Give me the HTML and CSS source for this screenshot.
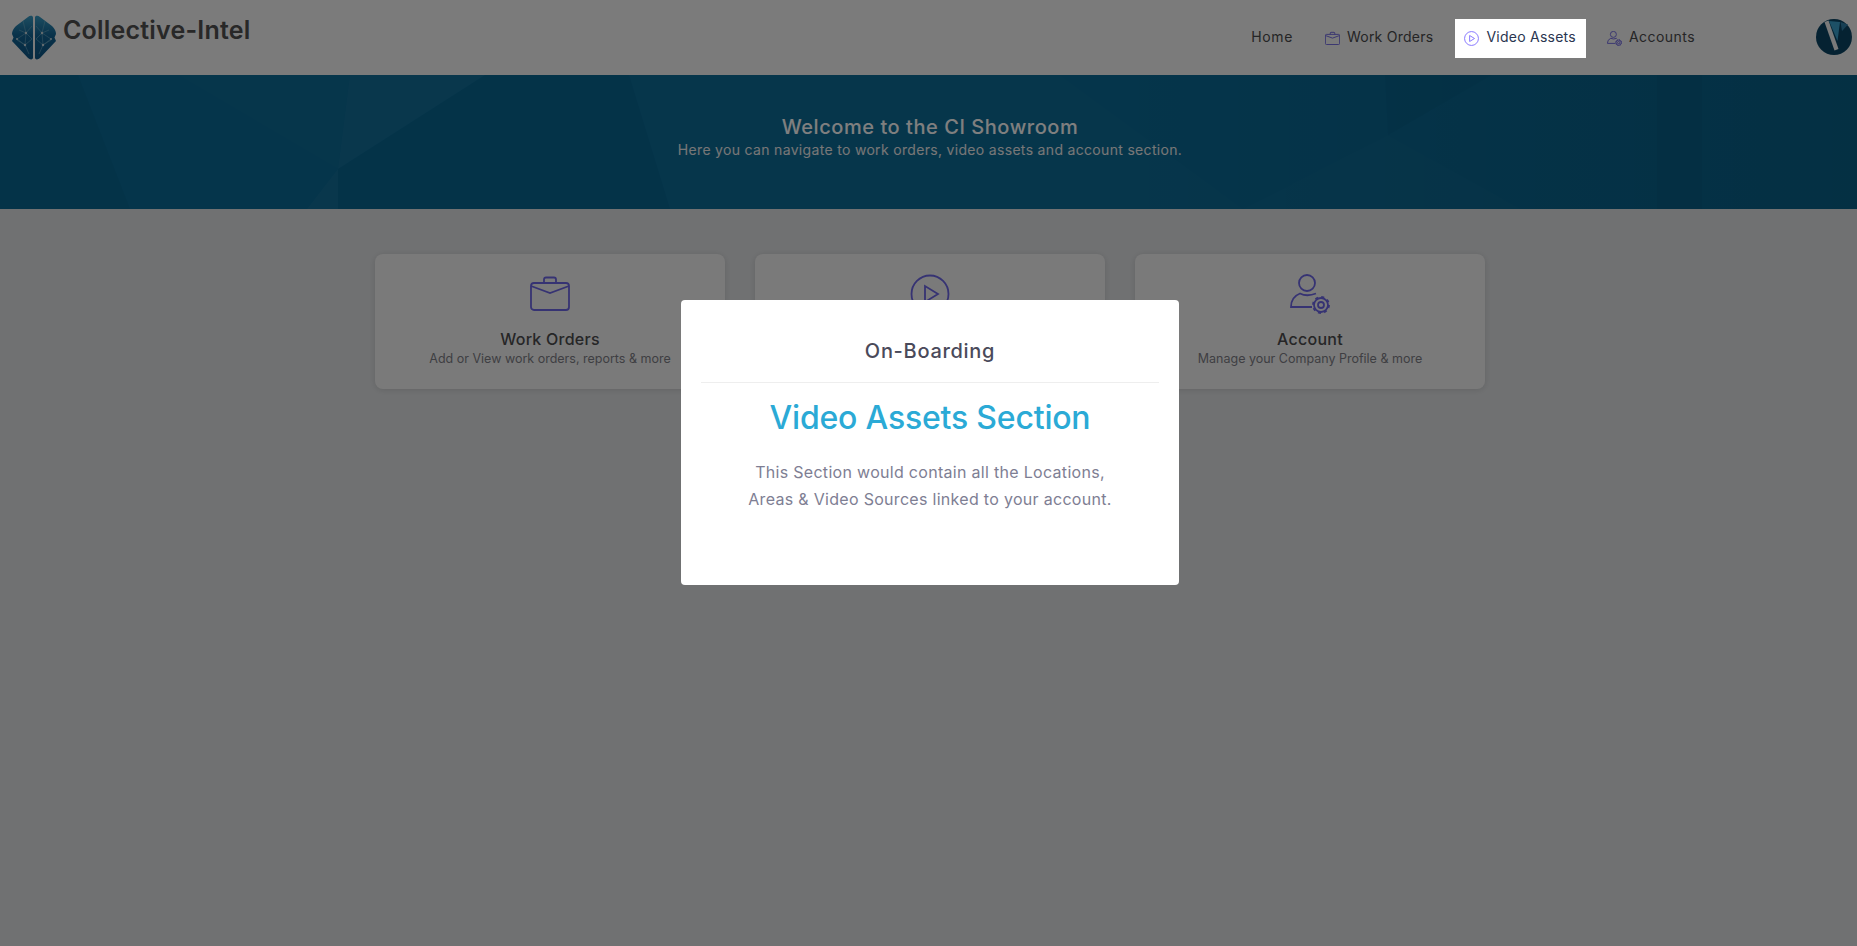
FILE: index.html
```html
<!DOCTYPE html>
<html lang="en">
<head>
<meta charset="utf-8">
<title>Collective-Intel</title>
<link rel="stylesheet" href="styles.css">
</head>
<body>
<svg class="defs" width="0" height="0" aria-hidden="true">
  <defs>
    <linearGradient id="lobe" x1="0" y1="0" x2="0" y2="1">
      <stop offset="0" stop-color="#3a9cc4"/>
      <stop offset="0.45" stop-color="#126494"/>
      <stop offset="1" stop-color="#0e5584"/>
    </linearGradient>
    <linearGradient id="hero-shade" x1="0" y1="0" x2="1" y2="0">
      <stop offset="0" stop-color="#000" stop-opacity="0"/>
      <stop offset="0.6" stop-color="#000" stop-opacity="0"/>
      <stop offset="1" stop-color="#000" stop-opacity="0.1"/>
    </linearGradient>
    <symbol id="i-case" viewBox="0 0 40 36">
      <rect x="1" y="7" width="38" height="27" rx="3"/>
      <path d="M14 7V3.500Q14 1.500 16 1.500H24Q26 1.500 26 3.500V7"/>
      <path d="M1 10L20 17L39 10"/>
    </symbol>
    <symbol id="i-play" viewBox="0 0 40 40">
      <circle cx="20" cy="20" r="18.500"/>
      <path d="M15 12V28L28 20Z"/>
    </symbol>
    <symbol id="i-user" viewBox="0 0 40 40">
      <circle cx="17" cy="9" r="8"/>
      <path d="M22 33H1Q1 23 10 19.500Q17 23 26 19.500"/>
      <circle cx="31" cy="31" r="7"/>
      <circle cx="31" cy="31" r="8" stroke-dasharray="3 3.280"/>
      <circle cx="31" cy="31" r="3"/>
    </symbol>
  </defs>
</svg>

<header class="topbar">
  <a class="brand" href="#">
    <svg class="brand-logo" viewBox="0 0 46 45" aria-hidden="true">
      <g class="lobe">
        <path class="lobe-fill" d="M22 2.500C22 .5 19 .2 17 2L5 11Q1 15 1 19L2.500 22.500L1 26L17 43C19 45 22 45 22 42.500Z"/>
        <path class="lobe-net" d="M8 15L15 18L21 11M15 18L6 24L14 30L21 24M15 18L14 30L18 39M14 30L6 25M15 18L21 24M12 6L15 18"/>
        <circle class="lobe-dot" cx="15" cy="18" r="1.200"/>
        <circle class="lobe-dot" cx="14" cy="30" r="1.200"/>
        <circle class="lobe-dot" cx="6" cy="24" r="1"/>
      </g>
      <g class="lobe" transform="translate(46 0) scale(-1 1)">
        <path class="lobe-fill" d="M22 2.500C22 .5 19 .2 17 2L5 11Q1 15 1 19L2.500 22.500L1 26L17 43C19 45 22 45 22 42.500Z"/>
        <path class="lobe-net" d="M8 15L15 18L21 11M15 18L6 24L14 30L21 24M15 18L14 30L18 39M14 30L6 25M15 18L21 24M12 6L15 18"/>
        <circle class="lobe-dot" cx="15" cy="18" r="1.200"/>
        <circle class="lobe-dot" cx="14" cy="30" r="1.200"/>
        <circle class="lobe-dot" cx="6" cy="24" r="1"/>
      </g>
    </svg>
    <span class="brand-name">Collective-Intel</span>
  </a>
  <nav class="nav">
    <a class="nav-item" href="#">Home</a>
    <a class="nav-item" href="#"><svg class="nav-icon"><use href="#i-case"/></svg>Work Orders</a>
    <a class="nav-item nav-item-active" href="#"><svg class="nav-icon"><use href="#i-play"/></svg>Video Assets</a>
    <a class="nav-item nav-item-last" href="#"><svg class="nav-icon"><use href="#i-user"/></svg>Accounts</a>
  </nav>
  <svg class="avatar" viewBox="0 0 36 36" aria-hidden="true">
    <circle cx="18" cy="18" r="18" fill="#0a4464"/>
    <path d="M24.500 3L32 5.500L26 12Z" fill="#2f7fa8"/>
    <path d="M13 2L24 3L21.500 22Z" fill="#3aa0cc"/>
    <path d="M8.500 3L12.500 1.500L22.500 30L18.500 31.500Z" fill="#f4f4f4"/>
  </svg>
</header>

<section class="hero">
  <svg class="hero-facets" viewBox="0 0 1857 134" preserveAspectRatio="none" aria-hidden="true">
    <polygon class="f-dark" points="0,0 78,0 130,134 0,134"/>
    <polygon class="f-soft" points="178,0 350,0 338,94"/>
    <polygon class="f-light" points="350,0 485,0 338,94"/>
    <polygon class="f-light" points="338,94 307,134 338,134"/>
    <polygon class="f-dark" points="485,0 629,0 670,134 338,134 338,94"/>
    <polygon class="f-soft" points="629,0 1060,0 1243,134 670,134"/>
    <polygon class="f-soft" points="1388,60 1243,134 1521,134"/>
    <polygon class="f-dark" points="1385,0 1492,0 1388,60"/>
    <polygon class="f-dark" points="1657,0 1702,0 1702,134 1657,134"/>
    <rect class="f-shade" width="1857" height="134"/>
  </svg>
  <h1 class="hero-title">Welcome to the CI Showroom</h1>
  <p class="hero-sub">Here you can navigate to work orders, video assets and account section.</p>
</section>

<main class="cards">
  <a class="card" href="#">
    <svg class="card-icon"><use href="#i-case"/></svg>
    <h2 class="card-title">Work Orders</h2>
    <p class="card-sub">Add or View work orders, reports &amp; more</p>
  </a>
  <a class="card" href="#">
    <svg class="card-icon"><use href="#i-play"/></svg>
  </a>
  <a class="card" href="#">
    <svg class="card-icon"><use href="#i-user"/></svg>
    <h2 class="card-title">Account</h2>
    <p class="card-sub">Manage your Company Profile &amp; more</p>
  </a>
</main>

<div class="overlay">
  <div class="modal">
    <h3 class="modal-title">On-Boarding</h3>
    <h2 class="modal-heading">Video Assets Section</h2>
    <p class="modal-text">This Section would contain all the Locations,<br>Areas &amp; Video Sources linked to your account.</p>
  </div>
</div>
</body>
</html>
```

FILE: styles.css
```css
* {
  box-sizing: border-box;
}

html,
body {
  margin: 0;
  height: 100%;
}

body {
  background: #e1e3e5;
  font-family: Inter, "Open Sans", "Liberation Sans", sans-serif;
  overflow: hidden;
}

a {
  color: inherit;
  text-decoration: none;
}

h1,
h2,
h3,
p {
  margin: 0;
  font-weight: inherit;
}

.defs {
  display: block;
  height: 0;
}

.topbar {
  display: flex;
  align-items: center;
  height: 75px;
  padding-right: 5px;
  background: #f6f6f6;
}

.brand {
  display: flex;
  align-items: center;
  gap: 6px;
  margin: -4px 0 0 11px;
}

.brand-logo {
  width: 46px;
  height: 45px;
  margin-top: 4px;
}

.lobe-fill {
  fill: url(#lobe);
}

.lobe-net {
  fill: none;
  stroke: #7fb4c8;
  stroke-width: 0.5;
}

.lobe-dot {
  fill: #c5d6de;
}

.brand-name {
  margin-top: -11px;
  font-size: 25px;
  font-weight: 600;
  letter-spacing: 0.2px;
  color: #505050;
}

.nav {
  display: flex;
  align-items: center;
  gap: 12px;
  margin-left: auto;
  margin-top: 2px;
}

.nav-item {
  display: flex;
  align-items: center;
  gap: 7px;
  height: 39px;
  padding: 0 10px 4px;
  font-size: 14px;
  letter-spacing: 0.25px;
  color: #4a4a4c;
  white-space: nowrap;
}

.nav-item:first-child {
  letter-spacing: 0.6px;
}

.nav-item-active {
  position: relative;
  z-index: 20;
  padding: 0 10px 4px 9px;
  background: #fff;
  color: #2a3550;
}

.nav-item-last {
  margin-left: -1px;
  letter-spacing: 0.45px;
}

.nav-icon {
  width: 15px;
  height: 15px;
  margin-top: 4px;
  fill: none;
  stroke: #6f66e0;
  stroke-width: 2.500;
}

.nav-item-active .nav-icon {
  stroke: #8272ff;
}

.avatar {
  width: 36px;
  height: 36px;
  margin-left: 111px;
  margin-top: -1px;
}

.hero {
  position: relative;
  display: flex;
  flex-direction: column;
  align-items: center;
  height: 134px;
  padding: 39px 0 0 3px;
  background: #0a6a96;
  overflow: hidden;
}

.hero-facets {
  position: absolute;
  inset: 0;
  width: 100%;
  height: 100%;
}

.f-dark {
  fill: #000;
  opacity: 0.03;
}

.f-soft {
  fill: #fff;
  opacity: 0.015;
}

.f-light {
  fill: #fff;
  opacity: 0.035;
}

.f-shade {
  fill: url(#hero-shade);
}

.hero-title,
.hero-sub {
  position: relative;
}

.hero-title {
  font-size: 20px;
  font-weight: 500;
  letter-spacing: 0.55px;
  line-height: 26px;
  color: #fff;
}

.hero-sub {
  font-size: 14px;
  letter-spacing: 0.32px;
  line-height: 20px;
  color: #eee;
}

.cards {
  display: flex;
  gap: 30px;
  padding: 45px 0 0 375px;
}

.card {
  display: flex;
  flex-direction: column;
  align-items: center;
  width: 350px;
  height: 135px;
  padding-top: 20px;
  border-radius: 8px;
  background: #f5f5f5;
  box-shadow: 0 1px 6px rgba(0, 0, 0, 0.12);
}

.card-icon {
  width: 40px;
  height: 40px;
  fill: none;
  stroke: #6d66e6;
  stroke-width: 1.800;
}

.card-title {
  margin-top: 13px;
  font-size: 16px;
  font-weight: 500;
  letter-spacing: 0.25px;
  line-height: 24px;
  color: #4c4c4e;
}

.card-sub {
  margin-top: -1px;
  font-size: 12.500px;
  line-height: 18px;
  color: #7e7e86;
}

.overlay {
  position: fixed;
  inset: 0;
  z-index: 10;
  padding: 300px 0 0 681px;
  background: rgba(0, 0, 0, 0.5);
}

.modal {
  display: flex;
  flex-direction: column;
  align-items: center;
  width: 498px;
  height: 285px;
  padding: 0 20px;
  border-radius: 4px;
  background: #fff;
  text-align: center;
}

.modal-title {
  align-self: stretch;
  height: 83px;
  padding-top: 37px;
  border-bottom: 1px solid #eee;
  font-size: 20px;
  font-weight: 500;
  letter-spacing: 0.7px;
  line-height: 28px;
  color: #4a4a5a;
}

.modal-heading {
  margin-top: 13px;
  font-size: 32px;
  font-weight: 500;
  letter-spacing: -0.2px;
  line-height: 44px;
  color: #2baad6;
}

.modal-text {
  margin-top: 19px;
  font-size: 16px;
  letter-spacing: 0.3px;
  line-height: 27px;
  color: #7e7e93;
}
```
